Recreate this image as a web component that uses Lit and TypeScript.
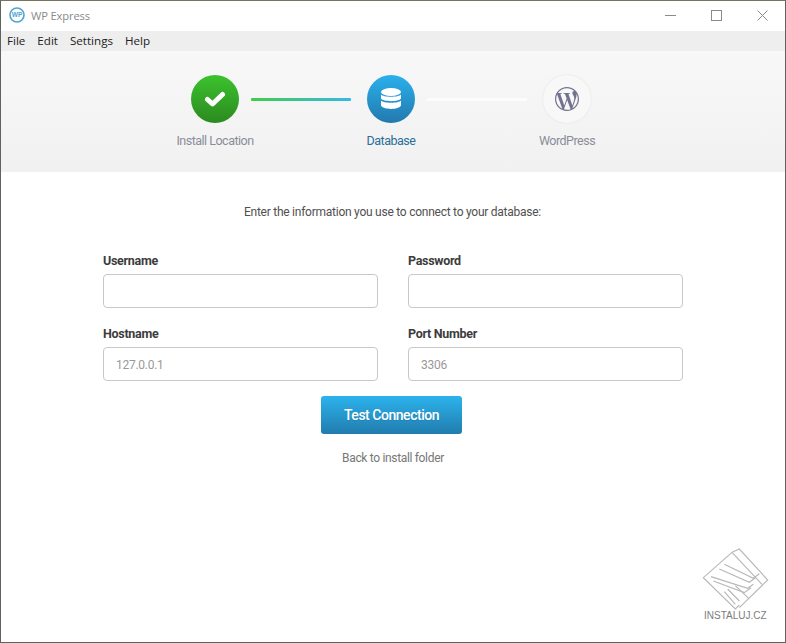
import { LitElement, html, css } from "lit";
import { customElement } from "lit/decorators.js";

@customElement("app-root")
export class AppRoot extends LitElement {
  static styles = css`
    :host { display: block; width: 786px; height: 643px; overflow: hidden; font-family: Roboto, "Liberation Sans", sans-serif; }
    * { box-sizing: border-box; }
    .win { width: 786px; height: 643px; position: relative; background: #fff; border: 1px solid #5c6460; border-top-color: #77755f; display: flex; flex-direction: column; }
    .title { height: 30px; flex: none; display: flex; align-items: center; padding: 0 0 2px 8px; background: #fff; }
    .logo { width: 16px; height: 16px; flex: none; }
    .title-text { margin-left: 6px; font: 11.2px "Open Sans", sans-serif; color: #8a8a8a; letter-spacing: -0.15px; }
    .ctrls { margin-left: auto; display: flex; }
    .ctrl { width: 46px; height: 28px; display: flex; align-items: center; justify-content: center; }
    .ctrl svg { display: block; }
    .menu { height: 20px; flex: none; background: #eeeeee; display: flex; align-items: center; padding: 0 0 1px 6px; gap: 12px; font: 11.6px "Open Sans", sans-serif; color: #222; }
    .steps { height: 121px; flex: none; background: linear-gradient(#f8f8f8, #f1f1f1); display: flex; justify-content: center; padding: 24px 4px 0 0; }
    .step { width: 48px; display: flex; flex-direction: column; align-items: center; }
    .circle { width: 48px; height: 48px; border-radius: 50%; display: flex; align-items: center; justify-content: center; flex: none; }
    .green { background: linear-gradient(#3cc22e, #2b8a20); }
    .blue { background: linear-gradient(#2bb0ec, #2279ad); }
    .white { background: #f8f8f8; box-shadow: 0 0 2px rgba(0,0,0,.1); }
    .lbl { margin-top: 10px; font-size: 12.5px; letter-spacing: -0.5px; line-height: 16px; white-space: nowrap; color: #8a8d99; }
    .lbl.on { color: #2a6f96; }
    .line { width: 100px; height: 3px; margin: 23px 16px 0 12px; flex: none; border-radius: 1px; }
    .l1 { background: linear-gradient(90deg, #41cc4b, #35b9e6); }
    .l2 { background: #fcfcfc; }
    .body { flex: 1; display: flex; flex-direction: column; align-items: center; padding-top: 32px; background: #fff; }
    .intro { font-size: 12px; letter-spacing: -0.25px; color: #505050; line-height: 16px; margin-left: -1px; }
    .grid { display: grid; grid-template-columns: 275px 275px; column-gap: 30px; row-gap: 18px; margin-top: 33px; }
    .field { display: flex; flex-direction: column; }
    .field label { font-size: 12.5px; font-weight: 700; color: #3c3c3c; line-height: 16px; letter-spacing: -0.3px; margin-bottom: 5px; }
    .input { height: 34px; border: 1px solid #c8c8c8; border-radius: 4px; padding: 1px 0 0 12px; display: flex; align-items: center; font-size: 12px; color: #999; letter-spacing: -0.27px; background: #fff; }
    .btn { width: 141px; height: 38px; margin-top: 15px; margin-left: -3px; border-radius: 3px; background: linear-gradient(#2cb3ec, #217cae); color: #fff; display: flex; align-items: center; justify-content: center; font-size: 14px; font-weight: 500; letter-spacing: -0.47px; text-shadow: 0 1px 1px rgba(0,0,0,.1); }
    .back { margin-top: 16px; font-size: 12px; letter-spacing: -0.33px; color: #777; line-height: 16px; }
    .mark { position: absolute; left: 695px; top: 544px; width: 80px; height: 80px; }
    .mark-text { position: absolute; left: 703px; top: 608px; font-family: "Liberation Sans", sans-serif; font-size: 10px; color: #7c7c7c; line-height: 14px; }
  `;

  private field(label: string, placeholder = "") {
    return html`<div class="field"><label>${label}</label><div class="input">${placeholder}</div></div>`;
  }

  render() {
    return html`<div class="win">
      <div class="title">
        <svg class="logo" viewBox="0 0 16 16">
          <circle cx="8" cy="8" r="7" fill="#fff" stroke="#4fa3d1" stroke-width="1.6"></circle>
          <text x="8" y="10.4" text-anchor="middle" font-family="Liberation Sans" font-size="6.5" font-weight="700" fill="#4fa3d1">WP</text>
        </svg>
        <span class="title-text">WP Express</span>
        <div class="ctrls">
          <div class="ctrl"><svg width="11" height="11" viewBox="0 0 11 11"><path d="M0 5.5H11" stroke="#8a8a8a" fill="none"></path></svg></div>
          <div class="ctrl"><svg width="11" height="11" viewBox="0 0 11 11"><rect x=".5" y=".5" width="10" height="10" stroke="#8a8a8a" fill="none"></rect></svg></div>
          <div class="ctrl"><svg width="11" height="11" viewBox="0 0 11 11"><path d="M.5.5L10.5 10.5M10.5.5L.5 10.5" stroke="#8a8a8a" fill="none"></path></svg></div>
        </div>
      </div>
      <div class="menu"><span>File</span><span>Edit</span><span>Settings</span><span>Help</span></div>
      <div class="steps">
        <div class="step">
          <div class="circle green">
            <svg width="22" height="18" viewBox="0 0 22 18"><path d="M3.5 9.5L8.5 14L18.5 4.5" fill="none" stroke="#fff" stroke-width="5" stroke-linejoin="round" stroke-linecap="round"></path></svg>
          </div>
          <div class="lbl">Install Location</div>
        </div>
        <div class="line l1"></div>
        <div class="step">
          <div class="circle blue">
            <svg width="22" height="24" viewBox="0 0 22 24" fill="#fff">
              <ellipse cx="11" cy="5" rx="10" ry="4"></ellipse>
              <path d="M1 7.5C3 10.5 19 10.5 21 7.5V11.5C19 15 3 15 1 11.5Z"></path>
              <path d="M1 13.5C3 16.5 19 16.5 21 13.5V18.5C19 23 3 23 1 18.5Z"></path>
            </svg>
          </div>
          <div class="lbl on">Database</div>
        </div>
        <div class="line l2"></div>
        <div class="step">
          <div class="circle white">
            <svg width="24" height="24" viewBox="0 0 24 24">
              <path fill="#72748f" d="M21.469 6.825c.84 1.537 1.318 3.3 1.318 5.175 0 3.979-2.156 7.456-5.363 9.325l3.295-9.527c.615-1.54.82-2.771.82-3.864 0-.405-.026-.78-.07-1.11m-7.981.105c.647-.03 1.232-.105 1.232-.105.582-.075.514-.93-.067-.899 0 0-1.755.135-2.88.135-1.064 0-2.85-.15-2.85-.15-.585-.03-.661.855-.075.885 0 0 .54.061 1.125.09l1.68 4.605-2.37 7.08L5.354 6.9c.649-.03 1.234-.1 1.234-.1.585-.075.516-.93-.065-.896 0 0-1.746.138-2.874.138-.2 0-.438-.008-.69-.015C4.911 3.15 8.235 1.215 12 1.215c2.809 0 5.365 1.072 7.286 2.833-.046-.003-.091-.009-.141-.009-1.06 0-1.812.923-1.812 1.914 0 .89.513 1.643 1.06 2.531.411.72.89 1.643.89 2.977 0 .915-.354 1.994-.821 3.479l-1.075 3.585-3.9-11.61.001.014zM12 22.784c-1.059 0-2.081-.153-3.048-.437l3.237-9.406 3.315 9.087c.024.053.05.101.078.149-1.12.393-2.325.609-3.582.609M1.211 12c0-1.564.336-3.05.935-4.39L7.29 21.709C3.694 19.96 1.212 16.271 1.211 12M12 0C5.385 0 0 5.385 0 12s5.385 12 12 12 12-5.385 12-12S18.615 0 12 0"></path>
            </svg>
          </div>
          <div class="lbl">WordPress</div>
        </div>
      </div>
      <div class="body">
        <div class="intro">Enter the information you use to connect to your database:</div>
        <div class="grid">
          ${this.field("Username")}
          ${this.field("Password")}
          ${this.field("Hostname", "127.0.0.1")}
          ${this.field("Port Number", "3306")}
        </div>
        <div class="btn">Test Connection</div>
        <div class="back">Back to install folder</div>
      </div>
      <svg class="mark" viewBox="0 0 240 240" fill="none" stroke="#b8b8b8" stroke-width="3.5">
        <path d="M108 22L22 98L118 192L130 180"></path>
        <path d="M108 22L130 12L215 105L130 188"></path>
        <path d="M108 22L198 118"></path>
        <path d="M85 58L172 100L190 86M70 72L160 112L178 98"></path>
        <path d="M45 95L155 130L172 118M52 108L145 143L165 128"></path>
        <path d="M85 140L118 178M95 132L130 168M118 122L158 160"></path>
      </svg>
      <div class="mark-text">INSTALUJ.CZ</div>
    </div>`;
  }
}
